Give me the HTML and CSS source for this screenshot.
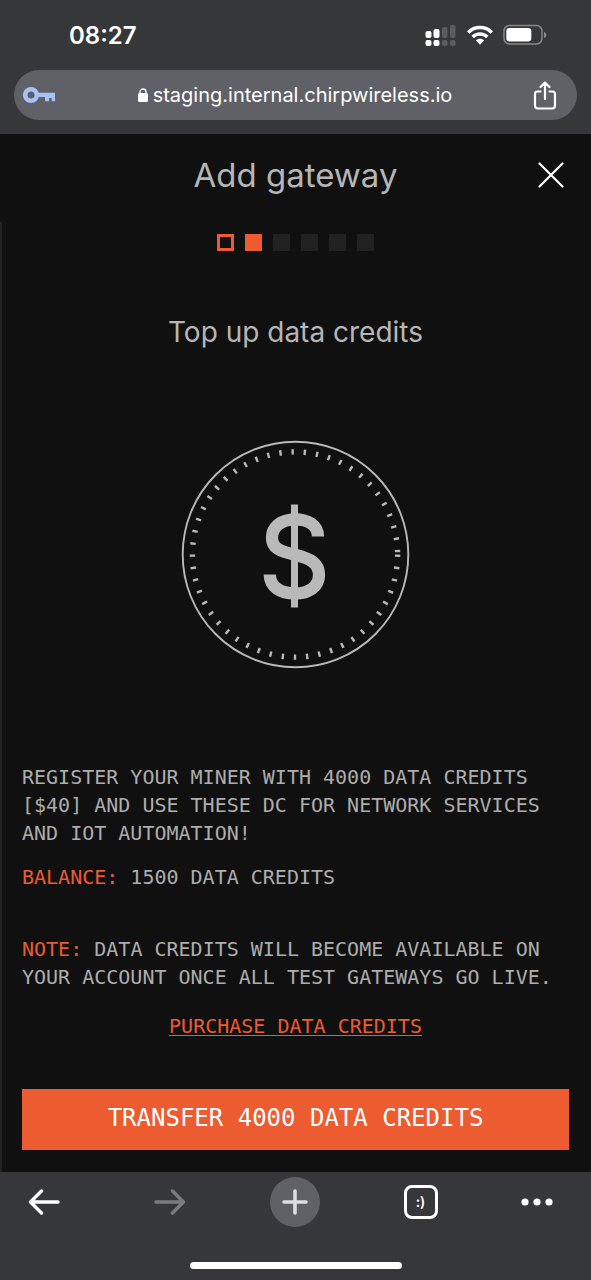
FILE: index.html
```html
<!DOCTYPE html>
<html lang="en">
<head>
<meta charset="utf-8">
<meta name="viewport" content="width=device-width, initial-scale=1">
<title>Add gateway</title>
<link rel="stylesheet" href="styles.css">
</head>
<body>
<header class="chrome-top">
  <div class="status">
    <time class="clock">08:27</time>
    <div class="indicators">
      <svg width="32" height="22" viewBox="0 0 32 22" aria-hidden="true">
        <g fill="#fff"><rect x="0.500" y="7" width="6" height="7" rx="2"/><rect x="8.500" y="5" width="6" height="9" rx="2"/><rect x="0.500" y="16" width="6" height="6" rx="2"/><rect x="8.500" y="16" width="6" height="6" rx="2"/></g>
        <g fill="#5b5c5e"><rect x="17" y="3" width="5.500" height="11" rx="2"/><rect x="25" y="1" width="5.500" height="13" rx="2"/><rect x="17" y="16" width="5.500" height="6" rx="2"/><rect x="25" y="16" width="5.500" height="6" rx="2"/></g>
      </svg>
      <svg width="28" height="22" viewBox="0 0 28 22" aria-hidden="true">
        <g fill="none" stroke="#fff" stroke-width="3.6"><path d="M2.2 8.4C8.7 1.800 19.300 1.800 25.800 8.400"/><path d="M6.700 13C10.700 9 17.300 9 21.300 13"/></g>
        <path d="M9.800 16.300C12.200 14.200 15.800 14.200 18.200 16.300L14 20.700Z" fill="#fff"/>
      </svg>
      <svg width="44" height="22" viewBox="0 0 44 22" aria-hidden="true">
        <rect x="1" y="1.500" width="38" height="18.500" rx="5.500" fill="none" stroke="#87888a" stroke-width="1.500"/>
        <rect x="3.300" y="4" width="25" height="13.500" rx="3.200" fill="#fff"/>
        <path d="M41 8v6c3.300-1.300 3.300-4.700 0-6z" fill="#87888a"/>
      </svg>
    </div>
  </div>
  <div class="address">
    <button class="icon-button" aria-label="Passwords">
      <svg width="34" height="18" viewBox="0 0 34 18"><circle cx="8" cy="9" r="5.800" fill="none" stroke="#a9c1f7" stroke-width="4.600"/><path d="M14 6.700H32V15.300H28.700V12H26V15.300H22V11H14Z" fill="#a9c1f7"/></svg>
    </button>
    <div class="url">
      <svg width="10" height="14" viewBox="0 0 10 14" aria-hidden="true"><rect y="5" width="10" height="9" rx="1.500" fill="#fff"/><path d="M2 6V4a3 3 0 0 1 6 0v2" fill="none" stroke="#fff" stroke-width="1.300"/></svg>
      <span>staging.internal.chirpwireless.io</span>
    </div>
    <button class="icon-button" aria-label="Share">
      <svg width="24" height="30" viewBox="0 0 24 30" fill="none" stroke="#fff" stroke-width="2.200" stroke-linecap="round" stroke-linejoin="round"><path d="M7.500 11.500H4.500Q2 11.500 2 14V25.500Q2 28.500 5 28.500H19Q22 28.500 22 25.500V14Q22 11.500 19.500 11.500H16.500M12 19V3M7.500 7L12 2.600L16.500 7"/></svg>
    </button>
  </div>
</header>

<main class="dialog">
  <div class="dialog-head">
    <h1 class="title">Add gateway</h1>
    <button class="icon-button" aria-label="Close">
      <svg width="26" height="26" viewBox="0 0 26 26" stroke="#fff" stroke-width="2.200" stroke-linecap="round"><path d="M1.500 1.500L24.500 24.500M24.500 1.500L1.500 24.500"/></svg>
    </button>
  </div>
  <div class="dialog-body">
    <ol class="steps" aria-label="Progress">
      <li class="step step-done"></li>
      <li class="step step-current"></li>
      <li class="step"></li>
      <li class="step"></li>
      <li class="step"></li>
      <li class="step"></li>
    </ol>
    <h2 class="subtitle">Top up data credits</h2>
    <svg class="coin" width="229" height="229" viewBox="11 9.500 229 229" fill="none" stroke="#b9b9b9" aria-hidden="true">
      <circle cx="125.500" cy="124" r="112.800" stroke-width="1.900"/>
      <circle cx="125" cy="124" r="102.600" stroke-width="5.400" stroke-dasharray="2.400 9.890"/>
      <path d="M148 106C148 95 138.500 88.800 125 88.800C111 88.800 102 96.500 102 107C102 118 110 120.800 125 124.300C140 128 149 132.500 149 144.500C149 156 139 163 125 163C110 163 99.800 156 99.800 144" stroke-width="12.300"/>
      <path d="M124.500 74V177" stroke-width="7"/>
    </svg>
    <p class="copy">REGISTER YOUR MINER WITH 4000 DATA CREDITS [$40] AND USE THESE DC FOR NETWORK SERVICES AND IOT AUTOMATION!</p>
    <p class="copy balance"><span class="accent">BALANCE:</span> 1500 DATA CREDITS</p>
    <p class="copy note"><span class="accent">NOTE:</span> DATA CREDITS WILL BECOME AVAILABLE ON YOUR ACCOUNT ONCE ALL TEST GATEWAYS GO LIVE.</p>
    <a class="purchase" href="#purchase">PURCHASE DATA CREDITS</a>
    <button class="transfer">TRANSFER 4000 DATA CREDITS</button>
  </div>
</main>

<footer class="chrome-bottom">
  <nav class="toolbar" aria-label="Browser">
    <button class="tool" aria-label="Back">
      <svg width="32" height="26" viewBox="0 0 32 26" fill="none" stroke="#fff" stroke-width="3.400" stroke-linecap="round" stroke-linejoin="round"><path d="M30 13H2.500M13.500 2L2.500 13L13.500 24"/></svg>
    </button>
    <button class="tool" aria-label="Forward">
      <svg width="32" height="26" viewBox="0 0 32 26" fill="none" stroke="#7b7c7e" stroke-width="3.400" stroke-linecap="round" stroke-linejoin="round"><path d="M2 13H29.500M18.500 2L29.500 13L18.500 24"/></svg>
    </button>
    <button class="tool tool-new" aria-label="New tab">
      <svg width="26" height="26" viewBox="0 0 26 26" stroke="#dcdee1" stroke-width="3.600" stroke-linecap="round"><path d="M13 2V24M2 13H24"/></svg>
    </button>
    <button class="tool" aria-label="Tabs"><span class="tabs">:)</span></button>
    <button class="tool tool-more" aria-label="More">
      <svg width="32" height="8" viewBox="0 0 32 8" fill="#fff"><circle cx="4" cy="4" r="3.600"/><circle cx="16" cy="4" r="3.600"/><circle cx="28" cy="4" r="3.600"/></svg>
    </button>
  </nav>
  <div class="home-bar"></div>
</footer>
</body>
</html>
```
FILE: styles.css
```css
* {
  box-sizing: border-box;
}

body {
  margin: 0;
  min-height: 100vh;
  display: flex;
  flex-direction: column;
  background: #101010;
  color: #b6b6b6;
  font-family: Inter, "Liberation Sans", sans-serif;
}

button {
  margin: 0;
  padding: 0;
  border: 0;
  background: none;
  color: inherit;
  font: inherit;
  cursor: pointer;
}

svg {
  display: block;
  flex: none;
}

.chrome-top {
  padding: 0 14px 14px;
  background: #363739;
  color: #fff;
}

.status {
  height: 70px;
  padding: 0 30px 0 55px;
  display: flex;
  align-items: center;
  justify-content: space-between;
}

.clock {
  font-size: 24px;
  font-weight: 600;
}

.indicators {
  display: flex;
  align-items: center;
  gap: 9px;
}

.address {
  height: 50px;
  padding: 0 20px 0 9px;
  display: flex;
  align-items: center;
  justify-content: space-between;
  border-radius: 25px;
  background: #5f6166;
}

.url {
  display: flex;
  align-items: center;
  gap: 5px;
  font-size: 20px;
}

.dialog {
  flex: 1;
  display: flex;
  flex-direction: column;
}

.dialog-head {
  height: 88px;
  padding: 0 27px 6px;
  display: grid;
  grid-template-columns: 26px 1fr 26px;
  align-items: center;
}

.title {
  grid-column: 2;
  margin: 0;
  text-align: center;
  font-size: 33px;
  font-weight: 400;
}

.dialog-body {
  flex: 1;
  padding: 12px 22px 22px 20px;
  border-left: 2px solid #222;
  display: flex;
  flex-direction: column;
}

.steps {
  margin: 0;
  padding: 0;
  display: flex;
  justify-content: center;
  gap: 11px;
  list-style: none;
}

.step {
  width: 17px;
  height: 17px;
  background: #212122;
}

.step-done {
  border: 3px solid #ed5b30;
  background: none;
}

.step-current {
  background: #ed5b30;
}

.subtitle {
  margin: 63px 0 90px;
  text-align: center;
  font-size: 28px;
  line-height: 36px;
  font-weight: 400;
}

.coin {
  align-self: center;
  margin-bottom: 94px;
}

.copy,
.purchase,
.transfer {
  font-family: "DejaVu Sans Mono", "Liberation Mono", monospace;
}

.copy {
  margin: 0;
  font-size: 20px;
  line-height: 28px;
  color: #adadad;
}

.balance {
  margin-top: 16px;
}

.note {
  margin-top: 44px;
}

.accent {
  color: #ed5b30;
}

.purchase {
  align-self: center;
  margin: 21px 0 49px;
  color: #ed5b30;
  font-size: 20px;
  line-height: 28px;
  text-decoration: underline;
  text-decoration-thickness: 1px;
  text-underline-offset: 2px;
}

.transfer {
  height: 61px;
  padding-bottom: 4px;
  background: #ed5b30;
  color: #fff;
  font-size: 24px;
}

.chrome-bottom {
  background: #363739;
  padding: 5px 0 11px;
}

.toolbar {
  padding: 0 38px 0 19px;
  display: flex;
  align-items: center;
  justify-content: space-between;
}

.tool {
  width: 50px;
  height: 50px;
  display: flex;
  align-items: center;
  justify-content: center;
}

.tool-new {
  border-radius: 50%;
  background: #5f6166;
}

.tool-more {
  width: 32px;
}

.tabs {
  width: 34px;
  height: 34px;
  border: 3px solid #fff;
  border-radius: 8px;
  color: #fff;
  font-size: 14px;
  line-height: 28px;
  font-weight: 600;
  text-align: center;
}

.home-bar {
  width: 212px;
  height: 7px;
  margin: 35px auto 0;
  border-radius: 4px;
  background: #fff;
}
```
